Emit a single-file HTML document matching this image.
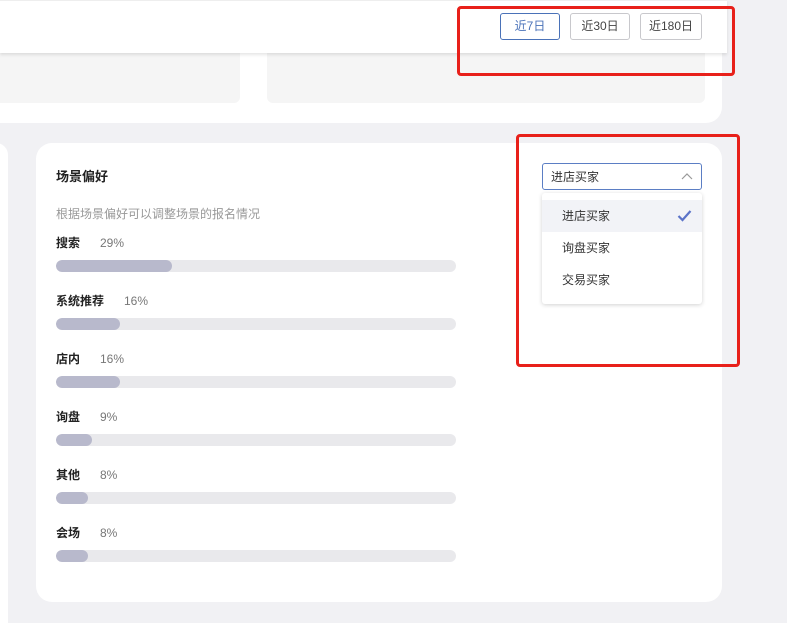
<!DOCTYPE html>
<html><head><meta charset="utf-8"><style>
*{margin:0;padding:0;box-sizing:border-box}
body{width:787px;height:615px;background:#f1f1f4;position:relative;overflow:hidden;font-family:"Liberation Sans","Noto Sans CJK SC",sans-serif}
.a{position:absolute}
.btn{position:absolute;top:13px;height:27px;border:1px solid #c8c8cc;border-radius:3px;font-size:12px;color:#444;text-align:center;line-height:25px;background:#fff}
.lab{position:absolute;left:56px;font-size:12px;font-weight:bold;color:#222;line-height:16px}
.pct{position:absolute;font-size:12px;color:#777;line-height:16px}
.bar{position:absolute;left:56px;width:400px;height:12px;border-radius:6px;background:#e9e9ec;overflow:hidden}
.bar i{display:block;height:12px;border-radius:6px;background:#b8b9cc}
.it{position:absolute;left:20px;font-size:12px;color:#333;line-height:16px}
</style></head><body>
<div class="a" style="left:0;top:0;width:722px;height:123px;background:#fff;border-radius:0 0 16px 0"></div>
<div class="a" style="left:0;top:53px;width:240px;height:50px;background:#f5f5f5;border-radius:0 0 6px 0"></div>
<div class="a" style="left:267px;top:53px;width:438px;height:50px;background:#f5f5f5;border-radius:0 0 6px 6px"></div>
<div class="a" style="left:0;top:0;width:727px;height:53px;background:#fff;border-top:1px solid #eee;box-shadow:0 2px 3px rgba(0,0,0,.1)"></div>
<div class="btn" style="left:500px;width:60px;border-color:#4a72b8;color:#4a72b8">近7日</div>
<div class="btn" style="left:570px;width:60px">近30日</div>
<div class="btn" style="left:640px;width:62px">近180日</div>

<div class="a" style="left:-20px;top:143px;width:28px;height:480px;background:#fff;border-radius:0 12px 0 0"></div>
<div class="a" style="left:36px;top:143px;width:686px;height:459px;background:#fff;border-radius:16px"></div>
<div class="a" style="left:56px;top:168px;font-size:13px;font-weight:bold;color:#222;line-height:18px">场景偏好</div>
<div class="a" style="left:56px;top:206px;font-size:12px;color:#999;line-height:16px">根据场景偏好可以调整场景的报名情况</div>

<div class="lab" style="top:235px">搜索</div><div class="pct" style="left:100px;top:235px">29%</div>
<div class="bar" style="top:260px"><i style="width:116px"></i></div>
<div class="lab" style="top:293px">系统推荐</div><div class="pct" style="left:124px;top:293px">16%</div>
<div class="bar" style="top:318px"><i style="width:64px"></i></div>
<div class="lab" style="top:351px">店内</div><div class="pct" style="left:100px;top:351px">16%</div>
<div class="bar" style="top:376px"><i style="width:64px"></i></div>
<div class="lab" style="top:409px">询盘</div><div class="pct" style="left:100px;top:409px">9%</div>
<div class="bar" style="top:434px"><i style="width:36px"></i></div>
<div class="lab" style="top:467px">其他</div><div class="pct" style="left:100px;top:467px">8%</div>
<div class="bar" style="top:492px"><i style="width:32px"></i></div>
<div class="lab" style="top:525px">会场</div><div class="pct" style="left:100px;top:525px">8%</div>
<div class="bar" style="top:550px"><i style="width:32px"></i></div>

<div class="a" style="left:542px;top:163px;width:160px;height:27px;border:1px solid #5b7ec4;border-radius:3px;background:#fff">
<div class="a" style="left:8px;top:5px;font-size:12px;color:#333;line-height:16px">进店买家</div>
<svg class="a" style="left:138px;top:8px" width="12" height="10"><path d="M1 7 L6 2 L11 7" fill="none" stroke="#999" stroke-width="1.2"/></svg>
</div>
<div class="a" style="left:542px;top:193px;width:160px;height:111px;background:#fff;border-radius:3px;box-shadow:0 1px 4px rgba(0,0,0,.18)">
<div class="a" style="left:0;top:7px;width:160px;height:32px;background:#f2f3f7"></div>
<div class="it" style="top:15px">进店买家</div>
<svg class="a" style="left:135px;top:16px" width="15" height="13"><path d="M1.5 7 L5.5 11 L13.5 2" fill="none" stroke="#5b73c8" stroke-width="2.2"/></svg>
<div class="it" style="top:47px">询盘买家</div>
<div class="it" style="top:79px">交易买家</div>
</div>

<div class="a" style="left:457px;top:6px;width:278px;height:70px;border:3px solid #e8201a;border-radius:4px"></div>
<div class="a" style="left:516px;top:134px;width:224px;height:233px;border:3px solid #e8201a;border-radius:4px"></div>
</body></html>
